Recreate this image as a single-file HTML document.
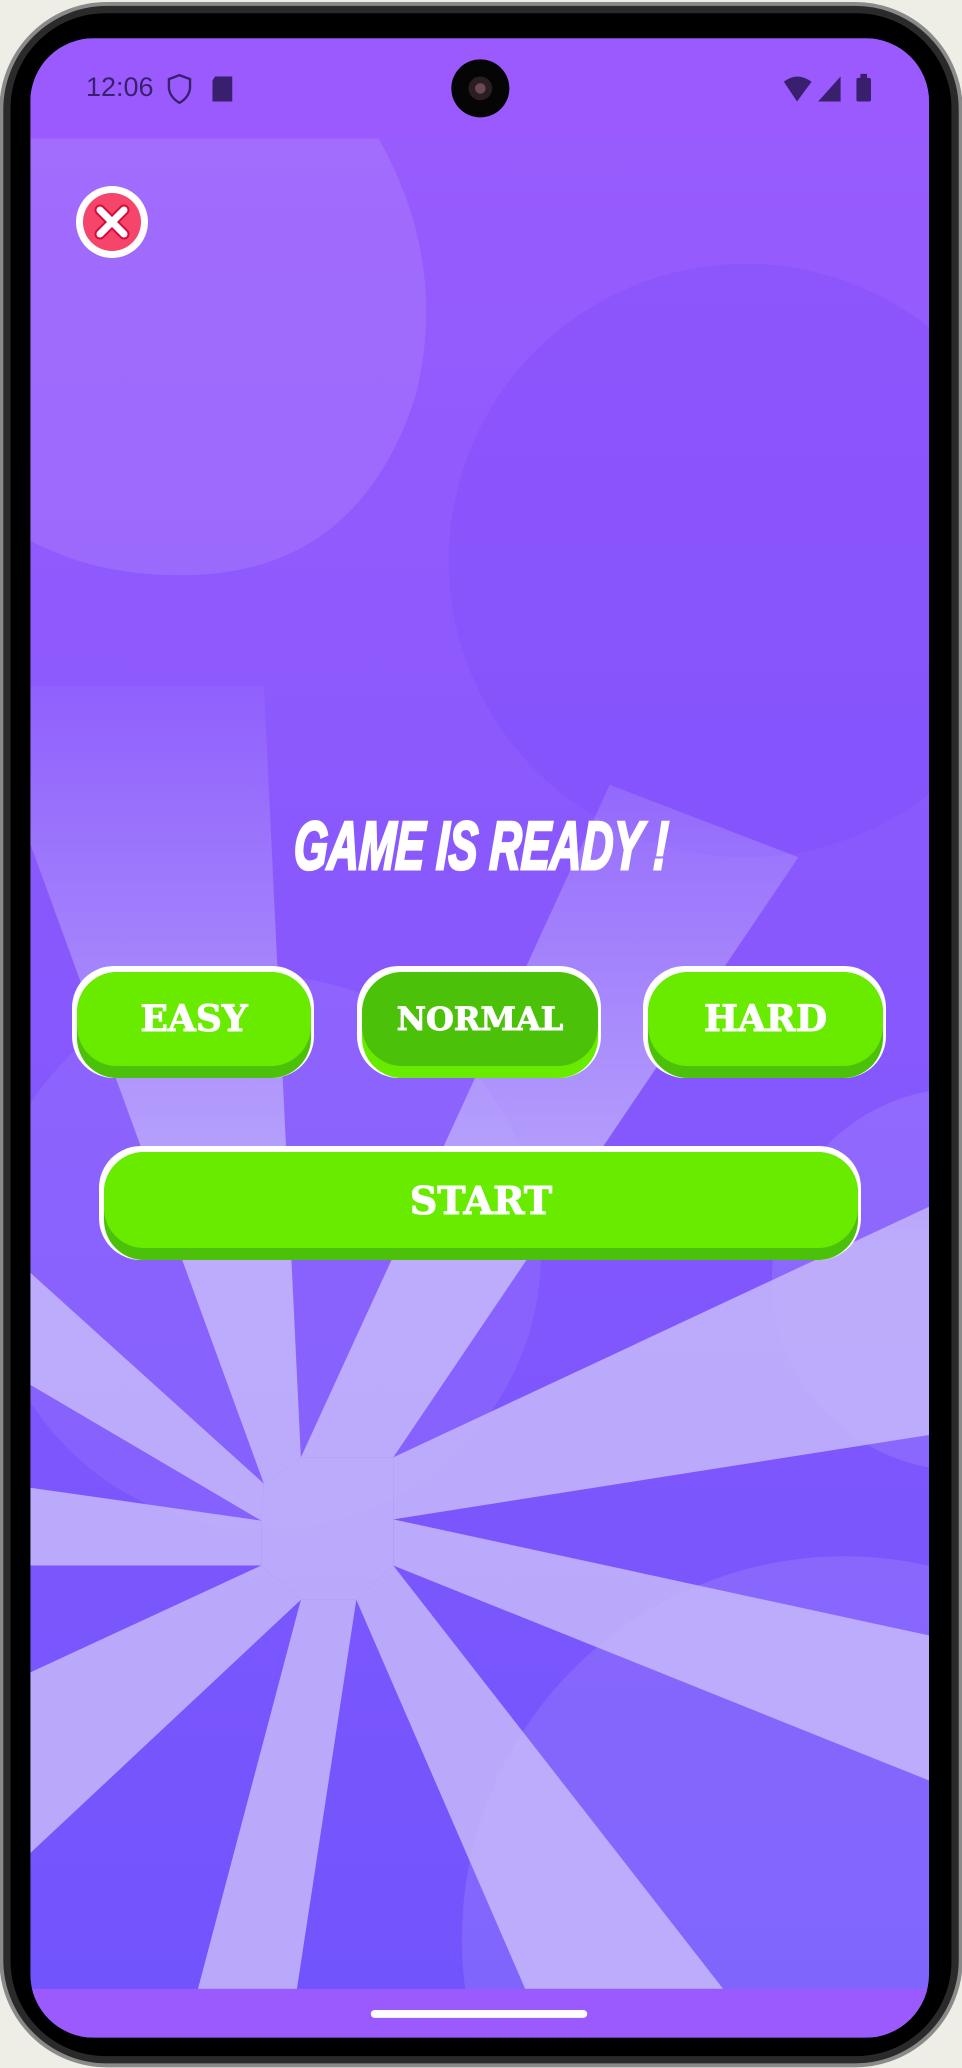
<!DOCTYPE html>
<html><head><meta charset="utf-8">
<style>
html,body{margin:0;padding:0;}
body{width:962px;height:2068px;position:relative;overflow:hidden;background:#efeee6;font-family:"Liberation Sans",sans-serif;}
.abs{position:absolute;}
.btn{position:absolute;border-radius:42px;background:#fff;}
.btn .d{position:absolute;left:5px;top:6px;right:3px;bottom:0;border-radius:40px;background:#4cc10a;}
.btn .g{position:absolute;left:5px;top:6px;right:3px;bottom:12px;border-radius:40px;background:#69eb00;display:flex;align-items:center;justify-content:center;color:#fff;font-family:"DejaVu Serif",serif;font-weight:bold;font-size:36px;-webkit-text-stroke:1px #fff;}
.btn.n .d{background:#69eb00;}
.btn.n .g{background:#4cc10a;}
</style></head><body>
<svg class="abs" style="left:0;top:0" width="962" height="2068" viewBox="0 0 729 1568" preserveAspectRatio="none">
<defs>
<linearGradient id="bg" x1="0" y1="0" x2="0" y2="1">
<stop offset="0" stop-color="#9a5cfd"/><stop offset="0.5" stop-color="#8658fd"/><stop offset="1" stop-color="#7154fd"/>
</linearGradient>
<linearGradient id="ray" gradientUnits="userSpaceOnUse" x1="0" y1="480" x2="0" y2="950">
<stop offset="0" stop-color="#c6b8fb" stop-opacity="0"/><stop offset="1" stop-color="#c6b8fb" stop-opacity="0.85"/>
</linearGradient>
<clipPath id="sc"><rect x="23" y="29" width="681" height="1516" rx="48"/></clipPath>
</defs>
<rect x="1" y="3" width="727" height="1563" rx="80" fill="#2a2a2a" stroke="#8a8a8a" stroke-width="3"/>
<rect x="8" y="10" width="713" height="1549" rx="72" fill="#000"/>
<g clip-path="url(#sc)">
<rect x="23" y="29" width="681" height="1516" fill="url(#bg)"/>
<path d="M23 105 L287 105 Q340 200 315 300 Q270 440 130 436 Q70 435 23 410 Z" fill="#ffffff" opacity="0.1"/>
<circle cx="565" cy="425" r="225" fill="#7a48fb" opacity="0.3"/>
<circle cx="200" cy="950" r="210" fill="#ffffff" opacity="0.07"/>
<circle cx="730" cy="970" r="145" fill="#ffffff" opacity="0.1"/>
<circle cx="640" cy="1470" r="290" fill="#ffffff" opacity="0.1"/>
<g fill="url(#ray)">
<polygon points="23,520 200,520 228,1105 200,1125 23,640"/>
<polygon points="228,1105 462,595 605,650 298,1105"/>
<polygon points="23,965 200,1125 198,1153 23,1050"/>
<polygon points="23,1128 198,1153 198,1187 23,1187"/>
<polygon points="23,1268 198,1187 228,1213 23,1405"/>
<polygon points="228,1213 270,1213 225,1508 150,1508"/>
<polygon points="270,1213 298,1187 548,1508 398,1508"/>
<polygon points="298,1187 298,1152 704,1240 704,1350"/>
<polygon points="298,1105 704,915 704,1088 298,1152"/>
<polygon points="200,1125 228,1105 298,1105 298,1187 270,1213 228,1213 198,1187 198,1153"/>
</g>
<rect x="23" y="29" width="681" height="76" fill="#9a5afd"/>
<rect x="23" y="1508" width="681" height="40" fill="#9a5afd"/>
</g>
<rect x="281" y="1524" width="164" height="6" rx="3" fill="#fff"/>
<circle cx="364" cy="67" r="22" fill="#050505"/>
<circle cx="364" cy="67" r="9" fill="#2a1e22"/>
<circle cx="364" cy="67" r="4" fill="#6a4a55"/>
<path d="M128 60 L136 57 L144 60 L144 67 Q143 74 136 78 Q129 74 128 67 Z" fill="none" stroke="#3a1f6e" stroke-width="1.8"/>
<path d="M163 58 L176 58 L176 77 L161 77 L161 61 Z" fill="#3a1f6e"/>
<path d="M594 62 Q604 54 615 62 L604 77 Z" fill="#3a1f6e"/>
<path d="M620 77 L637 58 L637 77 Z" fill="#3a1f6e"/>
<rect x="649" y="59" width="11" height="18" rx="1.5" fill="#3a1f6e"/><rect x="652" y="56" width="5" height="4" fill="#3a1f6e"/>
</svg>
<div class="abs" style="left:86px;top:72px;font-size:27px;color:#3a1f6e;">12:06</div>
<svg class="abs" style="left:76px;top:186px" width="72" height="72" viewBox="0 0 72 72">
<circle cx="36" cy="36" r="36" fill="#fff"/>
<circle cx="36" cy="36" r="29" fill="#f5456a"/>
<path d="M24 24 L48 48 M48 24 L24 48" stroke="#d80a3a" stroke-width="11" stroke-linecap="round"/>
<path d="M24 24 L48 48 M48 24 L24 48" stroke="#fff" stroke-width="7" stroke-linecap="round"/>
</svg>
<div class="abs" style="left:0;width:962px;top:806px;height:80px;overflow:hidden;text-align:center;color:#fff;font-weight:bold;font-style:italic;font-size:68px;line-height:80px;"><span style="display:inline-block;transform:scaleX(0.64) skewX(-4deg);-webkit-text-stroke:3px #fff;">GAME IS READY !</span></div>
<div class="btn" style="left:72px;top:966px;width:242px;height:112px;"><div class="d"></div><div class="g">EASY</div></div>
<div class="btn n" style="left:357px;top:966px;width:244px;height:112px;"><div class="d"></div><div class="g" style="font-size:32px">NORMAL</div></div>
<div class="btn" style="left:643px;top:966px;width:243px;height:112px;"><div class="d"></div><div class="g">HARD</div></div>
<div class="btn" style="left:99px;top:1146px;width:762px;height:114px;"><div class="d"></div><div class="g" style="font-size:38px">START</div></div>
</body></html>
